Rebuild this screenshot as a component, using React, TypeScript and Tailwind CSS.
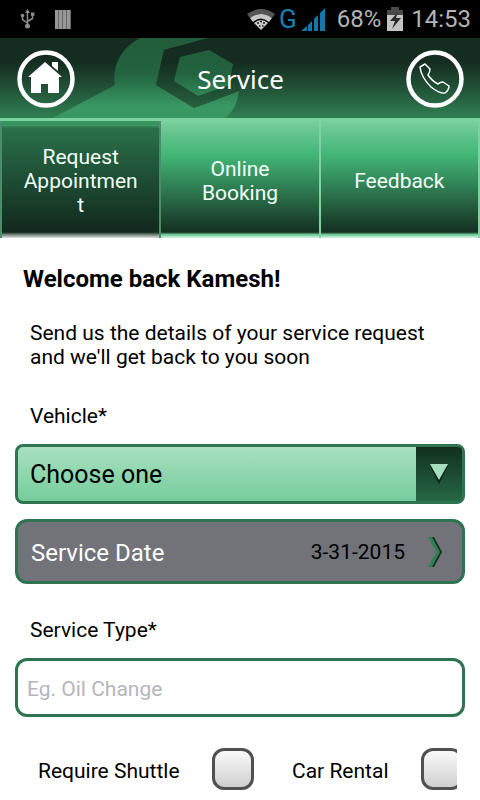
import React from "react";

const tabBase =
  "flex h-[117px] flex-1 min-w-0 items-center justify-center px-5 pt-0.5 text-center text-[21px] leading-6 text-[#f2fff7]";

const idleTab =
  "border-r-2 border-r-[#7bd3a1] bg-[linear-gradient(#7ad0a0,#61c28d_12%,#43b878_28%,#153222_94%,#153222_95%,#6cc794_97%,#d4f5e2)]";

const activeTab =
  "border-x-2 border-x-[#4b8c6a] bg-[linear-gradient(#389562,#389562_4%,#2a704a_6%,#12291d_95%,#6f7f77_97%,#dde3e0)]";

function StatusBar() {
  return (
    <div className="flex h-[38px] items-center justify-between bg-black pr-[9px] pl-5 font-[Roboto,sans-serif] text-[#b4b4b4]">
      <div className="flex items-center gap-5">
        <svg width="15" height="20" viewBox="0 0 15 20" fill="none" stroke="#8c8c8c" strokeWidth="1.500">
          <path d="M7.500 3v14M2.500 7v3.500l5 3.500M12.500 6v3.500l-5 3" />
          <path d="M7.500 0l2.500 4h-5z" fill="#8c8c8c" stroke="none" />
          <circle cx="7.500" cy="17" r="2.500" fill="#8c8c8c" stroke="none" />
          <circle cx="2.500" cy="6.500" r="1.800" fill="#8c8c8c" stroke="none" />
          <path d="M11 3.500h3.400v3.400H11z" fill="#8c8c8c" stroke="none" />
        </svg>
        <svg width="16" height="19" viewBox="0 0 16 19">
          <path d="M0 0h16v19H0z" fill="#666" />
          <path d="M0 0h3v19H0zM4 0h3v19H4zM8 0h3v19H8zM12 0h3v19h-3z" fill="#979797" />
        </svg>
      </div>
      <div className="flex items-center">
        <svg width="28" height="21" viewBox="0 0 28 21">
          <path d="M0 5Q14-5 28 5l-3 4Q14 1 3 9z" fill="#555" />
          <path d="M3 9Q14 1 25 9l-3 4Q14 6 6 13z" fill="#c8c8c8" />
          <path d="M7 14Q14 8 21 14L14 21z" fill="#c8c8c8" />
          <path d="M10 14h2M13 12.500h2M16 14h2M12 17h1.500M15 17h1.500" stroke="#222" strokeWidth="1.500" />
        </svg>
        <span className="ml-1 text-[26px] leading-8 text-[#1782b0]">G</span>
        <svg className="ml-1" width="24" height="23" viewBox="0 0 24 23" fill="#1678a4">
          <path d="M0 23l6-5v5zM7 17l4-4v10H7zM13 11l4-4v16h-4zM19 5l5-5v23h-5z" />
        </svg>
        <span className="ml-3 text-[24px] leading-8">68%</span>
        <svg className="ml-1.5" width="16" height="24" viewBox="0 0 16 24">
          <path d="M4 0h8v3h4v6H0V3h4z" fill="#4a4a4a" />
          <path d="M0 8h16v16H0z" fill="#c4c4c4" />
          <path d="M11 5L3 14h5l-3 8 9-11H9z" fill="#2a2a2a" />
        </svg>
        <span className="ml-2 text-[24px] leading-8">14:53</span>
      </div>
    </div>
  );
}

function Header() {
  return (
    <header className="relative flex h-20 items-center justify-between bg-linear-to-b from-[#142d20] from-30% to-[#2f8053] pt-0.5 pr-4 pl-[17px]">
      <svg className="absolute top-0 left-0" width="250" height="80" viewBox="0 0 250 80">
        <defs>
          <linearGradient id="wrench" gradientUnits="userSpaceOnUse" x1="0" y1="0" x2="0" y2="80">
            <stop offset="0" stopColor="#215c3b" />
            <stop offset="0.450" stopColor="#23633f" />
            <stop offset="0.850" stopColor="#389763" />
            <stop offset="1" stopColor="#389763" />
          </linearGradient>
          <linearGradient id="nut" gradientUnits="userSpaceOnUse" x1="0" y1="0" x2="0" y2="80">
            <stop offset="0.300" stopColor="#142d20" />
            <stop offset="1" stopColor="#26623f" />
          </linearGradient>
        </defs>
        <path
          d="M140 0C122 10 112 26 115 47L53 80H225C233 74 237 66 239 53L208 65 194 70 156 47 164 12 208 0z"
          fill="url(#wrench)"
        />
        <path d="M208 0L164 12 156 47 194 70 239 53 245 20z" fill="url(#nut)" opacity="0.600" />
        <path d="M180 19L209 12 233 26 229 47 198 58 174 43z" fill="url(#wrench)" />
      </svg>
      <a href="#home" aria-label="Home" className="relative">
        <svg width="58" height="58" viewBox="0 0 58 58">
          <circle cx="29" cy="29" r="26.500" fill="none" stroke="#fff" strokeWidth="4.500" />
          <path d="M28 12L11 27h3v16h10v-9h7v9h11V27h3z" fill="#fff" />
          <path d="M35 12h6v9l-6-5z" fill="#fff" />
        </svg>
      </a>
      <h1 className="relative font-['Noto_Sans',sans-serif] text-[26px] leading-9 text-white">Service</h1>
      <a href="#call" aria-label="Call" className="relative">
        <svg width="58" height="58" viewBox="0 0 58 58" fill="none" stroke="#fff">
          <circle cx="29" cy="29" r="26.500" strokeWidth="4.500" />
          <path
            d="M14 17L19 14 24 19Q24 22 22 25 26 31 32 34 34 32 37 32L43 36Q43 40 39 43 34 44 25 37 15 27 14 17z"
            strokeWidth="1.500"
            strokeLinejoin="round"
          />
        </svg>
      </a>
    </header>
  );
}

function Tabs() {
  return (
    <nav className="flex border-t-3 border-[#7bd3a1]">
      <button className={`${tabBase} ${activeTab}`}>
        <span className="min-w-0 wrap-anywhere">Request Appointment</span>
      </button>
      <button className={`${tabBase} ${idleTab}`}>
        <span>Online Booking</span>
      </button>
      <button className={`${tabBase} ${idleTab}`}>
        <span>Feedback</span>
      </button>
    </nav>
  );
}

const checkBox =
  "h-[42px] w-[42px] shrink-0 appearance-none rounded-xl border-3 border-[#505050] bg-linear-to-b from-[#fafafa] to-[#cfcfcf]";

export default function App() {
  return (
    <div className="min-h-screen bg-white font-[Roboto,sans-serif] text-black">
      <StatusBar />
      <Header />
      <Tabs />
      <main className="px-[15px] pt-[25px] text-[21px] leading-6">
        <h2 className="px-2 text-[24px] leading-8 font-bold">Welcome back Kamesh!</h2>
        <p className="mt-[26px] px-[15px]">Send us the details of your service request and we'll get back to you soon</p>
        <label htmlFor="vehicle" className="mt-[35px] block px-[15px]">Vehicle*</label>
        <div className="mt-4 grid h-[60px] rounded-lg border-3 border-[#2f7350] bg-linear-to-b from-[#a8e0c1] to-[#74cd9b]">
          <select id="vehicle" className="col-start-1 row-start-1 w-full appearance-none bg-transparent pt-0.5 pl-3 text-[25px]">
            <option>Choose one</option>
          </select>
          <span className="pointer-events-none col-start-1 row-start-1 flex w-[46px] items-center justify-center justify-self-end rounded-r bg-linear-to-b from-[#12301f] to-[#266845]">
            <svg width="22" height="22" viewBox="0 0 22 22">
              <path d="M2 3h18l-9 18z" fill="#0b2416" />
              <path d="M2 1h18l-9 16z" fill="#a5dfbf" />
            </svg>
          </span>
        </div>
        <button className="mt-[15px] flex h-[65px] w-full items-center rounded-xl border-3 border-[#2f7350] bg-[#717379] pr-5 pl-[13px]">
          <span className="pt-0.5 text-[24px] text-white">Service Date</span>
          <span className="ml-auto">3-31-2015</span>
          <svg className="ml-[22px]" width="15" height="32" viewBox="0 0 15 32">
            <path d="M3 1h4l8 15-8 15H3l8-15z" fill="#14301f" />
            <path d="M1 1h4l8 15-8 15H1l8-15z" fill="#2f8054" />
          </svg>
        </button>
        <label htmlFor="service-type" className="mt-[34px] block px-[15px]">Service Type*</label>
        <input
          id="service-type"
          type="text"
          placeholder="Eg. Oil Change"
          className="mt-4 block h-[59px] w-full rounded-xl border-3 border-[#2f7350] bg-white px-[9px] pt-0.5 placeholder:text-[#b5b6ba]"
        />
        <div className="mt-[31px] mr-2 flex h-[51px] items-start overflow-hidden pl-[23px] whitespace-nowrap">
          <label htmlFor="shuttle" className="w-[174px] shrink-0 leading-[46px]">Require Shuttle</label>
          <input id="shuttle" type="checkbox" className={checkBox} />
          <label htmlFor="rental" className="ml-[38px] w-[129px] shrink-0 leading-[46px]">Car Rental</label>
          <input id="rental" type="checkbox" className={checkBox} />
        </div>
      </main>
    </div>
  );
}
